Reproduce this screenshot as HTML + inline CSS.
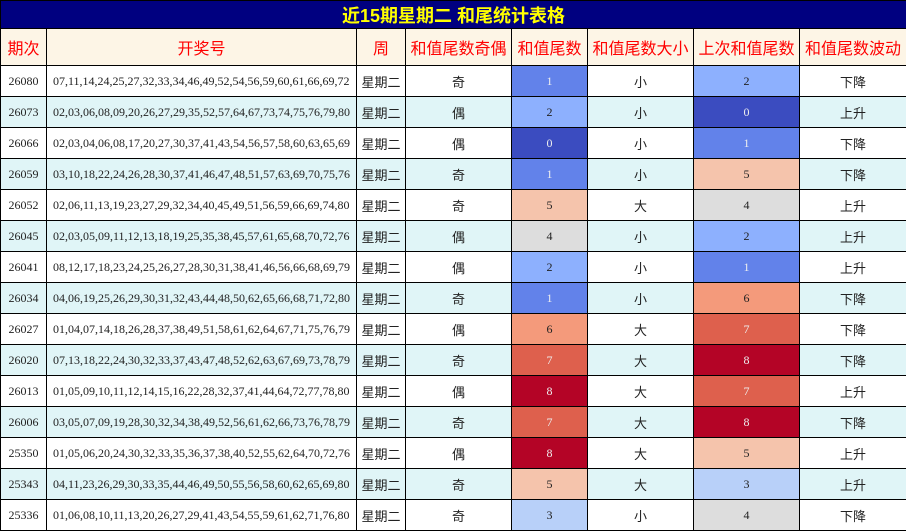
<!DOCTYPE html>
<html><head><meta charset="utf-8"><style>
*{margin:0;padding:0;box-sizing:border-box}
body{width:906px;height:531px;background:#fff;overflow:hidden;font-family:"Liberation Serif","Noto Sans CJK SC",serif}
table{border-collapse:collapse;table-layout:fixed;width:906px}
td,th{border:1px solid #000;text-align:center;font-size:12px;color:#222;font-weight:normal;overflow:hidden;white-space:nowrap;padding:0}
.t{background:#000080;color:#ffff00;font-family:"Liberation Sans","Noto Sans CJK SC",sans-serif;font-weight:bold;font-size:18px;height:28px}
.h th{background:#fdf5e6;color:#ff0000;font-size:16px;height:37px;font-family:"Liberation Sans","Noto Sans CJK SC",sans-serif}
tr.r td{height:31px}
tr.r:nth-child(even) td{background:#e0f5f7}
.c{font-family:"Liberation Sans","Noto Sans CJK SC",sans-serif;font-size:13px}
td.n{text-align:left;padding-left:6px}
tr.r td.d0{background:#3b4cc0;color:#eee}
tr.r td.d1{background:#6282ea;color:#eee}
tr.r td.d2{background:#8db0fe}
tr.r td.d3{background:#b8d0f9}
tr.r td.d4{background:#dddddd}
tr.r td.d5{background:#f5c4ac}
tr.r td.d6{background:#f49a7b}
tr.r td.d7{background:#de604d;color:#eee}
tr.r td.d8{background:#b40426;color:#eee}
</style></head><body>
<table>
<colgroup><col style="width:46px"><col style="width:310px"><col style="width:49px"><col style="width:106px"><col style="width:76px"><col style="width:106px"><col style="width:106px"><col style="width:107px"></colgroup>
<tr><td colspan="8" class="t">近15期星期二 和尾统计表格</td></tr>
<tr class="h"><th>期次</th><th>开奖号</th><th>周</th><th>和值尾数奇偶</th><th>和值尾数</th><th>和值尾数大小</th><th>上次和值尾数</th><th>和值尾数波动</th></tr>
<tbody>
<tr class="r"><td>26080</td><td class="n">07,11,14,24,25,27,32,33,34,46,49,52,54,56,59,60,61,66,69,72</td><td class="c">星期二</td><td class="c">奇</td><td class="d1">1</td><td class="c">小</td><td class="d2">2</td><td class="c">下降</td></tr>
<tr class="r"><td>26073</td><td class="n">02,03,06,08,09,20,26,27,29,35,52,57,64,67,73,74,75,76,79,80</td><td class="c">星期二</td><td class="c">偶</td><td class="d2">2</td><td class="c">小</td><td class="d0">0</td><td class="c">上升</td></tr>
<tr class="r"><td>26066</td><td class="n">02,03,04,06,08,17,20,27,30,37,41,43,54,56,57,58,60,63,65,69</td><td class="c">星期二</td><td class="c">偶</td><td class="d0">0</td><td class="c">小</td><td class="d1">1</td><td class="c">下降</td></tr>
<tr class="r"><td>26059</td><td class="n">03,10,18,22,24,26,28,30,37,41,46,47,48,51,57,63,69,70,75,76</td><td class="c">星期二</td><td class="c">奇</td><td class="d1">1</td><td class="c">小</td><td class="d5">5</td><td class="c">下降</td></tr>
<tr class="r"><td>26052</td><td class="n">02,06,11,13,19,23,27,29,32,34,40,45,49,51,56,59,66,69,74,80</td><td class="c">星期二</td><td class="c">奇</td><td class="d5">5</td><td class="c">大</td><td class="d4">4</td><td class="c">上升</td></tr>
<tr class="r"><td>26045</td><td class="n">02,03,05,09,11,12,13,18,19,25,35,38,45,57,61,65,68,70,72,76</td><td class="c">星期二</td><td class="c">偶</td><td class="d4">4</td><td class="c">小</td><td class="d2">2</td><td class="c">上升</td></tr>
<tr class="r"><td>26041</td><td class="n">08,12,17,18,23,24,25,26,27,28,30,31,38,41,46,56,66,68,69,79</td><td class="c">星期二</td><td class="c">偶</td><td class="d2">2</td><td class="c">小</td><td class="d1">1</td><td class="c">上升</td></tr>
<tr class="r"><td>26034</td><td class="n">04,06,19,25,26,29,30,31,32,43,44,48,50,62,65,66,68,71,72,80</td><td class="c">星期二</td><td class="c">奇</td><td class="d1">1</td><td class="c">小</td><td class="d6">6</td><td class="c">下降</td></tr>
<tr class="r"><td>26027</td><td class="n">01,04,07,14,18,26,28,37,38,49,51,58,61,62,64,67,71,75,76,79</td><td class="c">星期二</td><td class="c">偶</td><td class="d6">6</td><td class="c">大</td><td class="d7">7</td><td class="c">下降</td></tr>
<tr class="r"><td>26020</td><td class="n">07,13,18,22,24,30,32,33,37,43,47,48,52,62,63,67,69,73,78,79</td><td class="c">星期二</td><td class="c">奇</td><td class="d7">7</td><td class="c">大</td><td class="d8">8</td><td class="c">下降</td></tr>
<tr class="r"><td>26013</td><td class="n">01,05,09,10,11,12,14,15,16,22,28,32,37,41,44,64,72,77,78,80</td><td class="c">星期二</td><td class="c">偶</td><td class="d8">8</td><td class="c">大</td><td class="d7">7</td><td class="c">上升</td></tr>
<tr class="r"><td>26006</td><td class="n">03,05,07,09,19,28,30,32,34,38,49,52,56,61,62,66,73,76,78,79</td><td class="c">星期二</td><td class="c">奇</td><td class="d7">7</td><td class="c">大</td><td class="d8">8</td><td class="c">下降</td></tr>
<tr class="r"><td>25350</td><td class="n">01,05,06,20,24,30,32,33,35,36,37,38,40,52,55,62,64,70,72,76</td><td class="c">星期二</td><td class="c">偶</td><td class="d8">8</td><td class="c">大</td><td class="d5">5</td><td class="c">上升</td></tr>
<tr class="r"><td>25343</td><td class="n">04,11,23,26,29,30,33,35,44,46,49,50,55,56,58,60,62,65,69,80</td><td class="c">星期二</td><td class="c">奇</td><td class="d5">5</td><td class="c">大</td><td class="d3">3</td><td class="c">上升</td></tr>
<tr class="r"><td>25336</td><td class="n">01,06,08,10,11,13,20,26,27,29,41,43,54,55,59,61,62,71,76,80</td><td class="c">星期二</td><td class="c">奇</td><td class="d3">3</td><td class="c">小</td><td class="d4">4</td><td class="c">下降</td></tr>
</tbody></table>
</body></html>
